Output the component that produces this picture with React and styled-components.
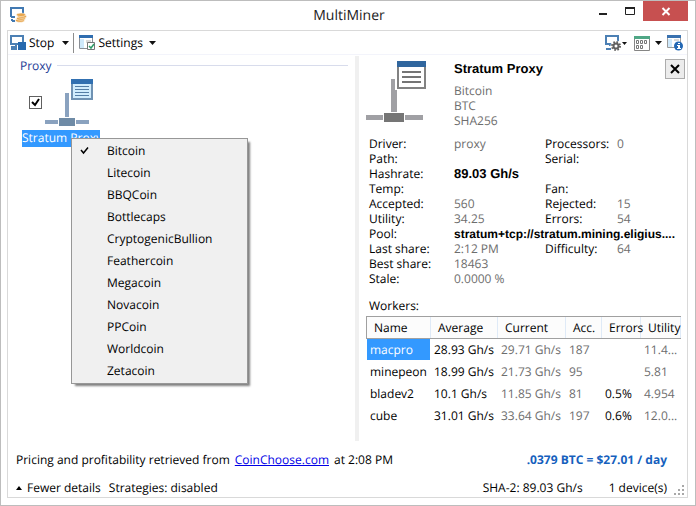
import React from "react";
import styled, { createGlobalStyle } from "styled-components";

const GlobalStyle = createGlobalStyle`
  * { box-sizing: border-box; }
  body { margin: 0; background: #fff; text-rendering: geometricPrecision; }
  body, button, input, table {
    font-family: "Open Sans", "Noto Sans", sans-serif;
    font-size: 12px;
    line-height: 15px;
    color: #000;
  }
  button { padding: 0; border: 0; background: none; text-rendering: inherit; }
`;

const Window = styled.div`
  display: flex;
  flex-direction: column;
  min-height: 100vh;
  padding: 0 7px 7px 6px;
  border: 1px solid #bdbdbd;
`;

const TitleBar = styled.header`
  display: grid;
  grid-template-columns: 1fr auto 1fr;
  height: 29px;
  padding-left: 3px;
`;

const AppIcon = styled.div`
  padding-top: 5px;
`;

const Title = styled.h1`
  margin: 0;
  padding-top: 5px;
  font-size: 14px;
  font-weight: 400;
  line-height: 20px;
  color: #222;
`;

const WindowButtons = styled.div`
  display: flex;
  justify-content: flex-end;
  height: 20px;
`;

const WindowButton = styled.button`
  width: ${(p) => (p.$close ? 45 : 27)}px;
  height: 20px;
  background: ${(p) => (p.$close ? "#c75050" : "transparent")};
  svg { display: block; margin: 0 auto; }
`;

const Client = styled.div`
  display: flex;
  flex: 1;
  flex-direction: column;
  border: 1px solid #d9d9d9;
`;

const Toolbar = styled.div`
  display: flex;
  align-items: center;
  height: 24px;
  padding: 0 4px 0 2px;
  border-bottom: 1px solid #f3f4fb;
`;

const ToolButton = styled.button`
  display: flex;
  align-items: center;
  gap: 3px;
  height: 22px;
`;

const ToolArrow = styled.button`
  width: 9px;
  height: 22px;
  margin: 0 ${(p) => p.$after || 0}px 0 ${(p) => p.$before || 0}px;
  svg { display: block; }
`;

const Divider = styled.span`
  width: 1px;
  height: 20px;
  margin-right: 5px;
  background: #8d8d8d;
`;

const Spacer = styled.span`
  flex: 1;
`;

const Panes = styled.div`
  display: flex;
  flex: 1;
  min-height: 386px;
  padding-top: 1px;
`;

const DeviceList = styled.main`
  flex: 1;
  padding: 2px 7px 0 12px;
`;

const GroupTitle = styled.h2`
  display: flex;
  align-items: center;
  gap: 5px;
  margin: 0;
  color: #1e3d96;
  font-size: 12px;
  font-weight: 400;
  &::after { content: ""; flex: 1; height: 1px; background: #d8dcec; }
`;

const Device = styled.div`
  position: relative;
  width: 78px;
  margin: 5px 0 0 2px;
`;

const DeviceTop = styled.div`
  display: flex;
  gap: 3px;
  padding-left: 7px;
`;

const Check = styled.input`
  appearance: none;
  width: 13px;
  height: 13px;
  margin: 18px 0 0;
  border: 1px solid #606060;
  background: #fff;
  &:checked {
    background: #fff url("data:image/svg+xml,%3Csvg xmlns='http://www.w3.org/2000/svg' viewBox='0 0 11 11'%3E%3Cpath d='M2 5l3 3 4-6' fill='none' stroke='%23000' stroke-width='2'/%3E%3C/svg%3E");
  }
`;

const DeviceName = styled.label`
  display: block;
  height: 17px;
  margin-top: 4px;
  background: #3399ff;
  color: #fff;
  text-align: center;
  white-space: nowrap;
`;

const Menu = styled.div`
  position: absolute;
  top: 60px;
  left: 49px;
  z-index: 1;
  width: 177px;
  padding: 1px 0;
  border: 1px solid #979797;
  background: #f0f0f0;
  box-shadow: 3px 3px 2px -1px rgba(0, 0, 0, 0.5);
`;

const MenuItem = styled.button`
  display: grid;
  grid-template-columns: 35px 1fr;
  align-items: center;
  width: 100%;
  height: 22px;
  padding-bottom: 1px;
  text-align: left;
  svg { margin-left: 8px; }
`;

const Splitter = styled.div`
  width: 4px;
  background: #f0f0f0;
`;

const Details = styled.aside`
  width: 328px;
  padding: 2px 2px 0 7px;
`;

const DetailsHead = styled.div`
  display: grid;
  grid-template-columns: 88px 1fr 20px;
  align-items: start;
  height: 78px;
`;

const Summary = styled.div`
  padding-top: 3px;
  color: #6d6d6d;
`;

const Strong = styled.strong`
  font-family: "Liberation Sans", Arial, sans-serif;
  font-size: ${(p) => (p.$large ? 13 : 12)}px;
  color: #000;
  white-space: nowrap;
`;

const SummaryName = styled.div`
  height: 22px;
`;

const CloseButton = styled.button`
  width: 20px;
  height: 20px;
  margin-top: 1px;
  border: 1px solid #acacac;
  background: #ececec;
  svg { display: block; margin: 0 auto; }
`;

const Facts = styled.dl`
  display: grid;
  grid-template-columns: 85px 91px 72px 1fr;
  grid-auto-rows: 15px;
  margin: 0 0 12px;
  padding-left: 3px;
  dt, dd { margin: 0; white-space: nowrap; }
  dd { color: #6d6d6d; }
`;

const WideValue = styled.dd`
  grid-column: 2 / -1;
`;

const Workers = styled.table`
  width: 315px;
  table-layout: fixed;
  border-collapse: separate;
  border-spacing: 0;
  border-left: 1px solid transparent;
  caption { padding: 0 0 3px 3px; text-align: left; }
`;

const HeadCell = styled.th`
  height: 23px;
  width: ${(p) => p.$width}px;
  padding: 0 0 0 7px;
  border: solid #a0a0a0;
  border-width: 1px 0;
  background: #fcfcfc;
  box-shadow: inset -1px 0 #dfeaf7, -1px 0 ${(p) => (p.$first ? "#a0a0a0" : "transparent")};
  font-weight: 400;
  text-align: left;
`;

const Cell = styled.td`
  height: 22px;
  padding: 0 0 1px 3px;
  color: ${(p) => (p.$selected ? "#fff" : p.$muted ? "#6d6d6d" : "#000")};
  background: ${(p) => (p.$selected ? "#3399ff" : "transparent")};
  box-shadow: inset -1px -1px #fff;
  white-space: nowrap;
`;

const StatusBar = styled.footer`
  display: flex;
  align-items: center;
  height: ${(p) => (p.$bottom ? 20 : 36)}px;
  padding: 0 20px 0 8px;
  a { margin: 0 5px; color: #0000e6; }
`;

const Earnings = styled.strong`
  color: #1560bd;
`;

const DetailsToggle = styled.button`
  display: flex;
  align-items: center;
  gap: 5px;
  margin-right: 8px;
`;

const StatusItem = styled.span`
  margin-right: ${(p) => p.$gap || 0}px;
`;

const Grip = styled.svg`
  margin: 6px -18px 0 7px;
`;

const Arrow = () => (
  <svg width="9" height="22" aria-hidden="true">
    <path d="M1 9h7L4.500 13z" fill="#111" />
  </svg>
);

const SmallArrow = () => (
  <svg width="9" height="22" aria-hidden="true">
    <path d="M1 10h5L3.500 13z" fill="#111" />
  </svg>
);

const CoinsIcon = () => (
  <svg width="17" height="17" viewBox="0 0 17 17" aria-hidden="true">
    <path d="M1 11V2h12v6M1 11h4M2 15h3M2 13v2" fill="none" stroke="#4279b2" strokeWidth="2" />
    <g fill="#e8a64c" stroke="#fff" strokeWidth="0.500">
      <ellipse cx="10" cy="14.500" rx="4.500" ry="1.800" />
      <ellipse cx="11" cy="12.500" rx="4.500" ry="1.800" />
      <ellipse cx="12" cy="10.500" rx="4.500" ry="1.800" />
      <ellipse cx="11" cy="8.800" rx="4.500" ry="1.800" />
    </g>
  </svg>
);

const StopIcon = () => (
  <svg width="16" height="17" viewBox="0 0 16 17" aria-hidden="true">
    <path d="M1 10V2h12v6M0 10h8M6 10v3M2 15v-2h4v2z" fill="none" stroke="#4c80b4" strokeWidth="2" />
    <path d="M8 8h8v8H8z" fill="#2769ae" />
  </svg>
);

const SettingsIcon = () => (
  <svg width="16" height="17" viewBox="0 0 16 17" aria-hidden="true">
    <path d="M.5 3.500h13v11H.5z" fill="#fff" stroke="#8a8f96" />
    <path d="M0 1h14v3H0z" fill="#2f6db0" />
    <path d="M1 5h4v9H1z" fill="#cfe9fb" />
    <path d="M7 6h5v3H7z" fill="#d9d9d9" />
    <path d="M8.500 8.500h7v7h-7z" fill="#fff" stroke="#777" />
    <path d="M10 12l2 2 3-4" fill="none" stroke="#2f9d68" strokeWidth="1.500" />
  </svg>
);

const GearMonitorIcon = () => (
  <svg width="16" height="17" viewBox="0 0 16 17" aria-hidden="true">
    <path d="M1 10V2h12v5M0 10h7M5 10v2M1 15h5" fill="none" stroke="#4c80b4" strokeWidth="2" />
    <circle cx="11" cy="12" r="5.500" fill="#fff" />
    <circle cx="11" cy="12" r="4" fill="none" stroke="#606060" strokeWidth="2" strokeDasharray="1.600 1.540" />
    <circle cx="11" cy="12" r="2.500" fill="none" stroke="#606060" strokeWidth="2" />
  </svg>
);

const CalendarIcon = () => (
  <svg width="16" height="16" viewBox="0 0 16 16" aria-hidden="true">
    <path d="M.5 2.500h15v13H.5z" fill="#fff" stroke="#858585" />
    <path d="M0 1h16v3H0z" fill="#4fa786" />
    <path d="M2.500 5.500h2v3h-2zM6.500 5.500h2v3h-2zM10.500 5.500h2v3h-2zM2.500 10.500h2v3h-2zM6.500 10.500h2v3h-2z" fill="#fff" stroke="#777" />
  </svg>
);

const InfoIcon = () => (
  <svg width="16" height="17" viewBox="0 0 16 17" aria-hidden="true">
    <path d="M.5 3.500h13v10H.5z" fill="#fff" stroke="#9b9b9b" />
    <path d="M0 1h14v3H0z" fill="#3a72b0" />
    <path d="M1 5h4v8H1z" fill="#cfe9fb" />
    <path d="M7 5h5v2H7z" fill="#d9d9d9" />
    <circle cx="11.500" cy="12" r="4.500" fill="#2468b4" />
    <path d="M11 9h2v1h-2zM10 11h3v3h1v1h-4v-1h1v-2h-1z" fill="#fff" />
  </svg>
);

const ProxyIcon = () => (
  <svg width="48" height="48" viewBox="0 0 48 48" shapeRendering="crispEdges" aria-hidden="true">
    <path d="M20 15h4v24h-4zM0 42h13v4H0zM31 42h13v4H31z" fill="#8aa2bf" />
    <path d="M14 40h16v8H14z" fill="#6f8ba6" />
    <path d="M26 1h22v21H26z" fill="#6f92b3" />
    <path d="M28 6h18v14H28z" fill="#d0ecfd" />
    <path d="M26 1h22v5H26z" fill="#3170b1" />
    <path d="M30 8h14v1H30zM30 11h14v1H30zM30 14h14v1H30zM30 17h14v1H30z" fill="#537da5" />
  </svg>
);

const LargeProxyIcon = () => (
  <svg width="62" height="66" viewBox="0 0 62 66" shapeRendering="crispEdges" aria-hidden="true">
    <path d="M25 21h4v11h2v22h-6zM-1 57h18v5H-1zM39 57h18v5H39z" fill="#a0a0a4" />
    <path d="M18 55h20v9H18z" fill="#757575" />
    <path d="M31 3h29v28H31z" fill="#828282" />
    <path d="M33 9h25v20H33z" fill="#fff" />
    <path d="M31 3h29v6H31z" fill="#30669e" />
    <path d="M36 13h19v2H36zM36 18h19v2H36zM36 23h19v2H36z" fill="#757575" />
  </svg>
);

const coins = [
  "Bitcoin", "Litecoin", "BBQCoin", "Bottlecaps", "CryptogenicBullion", "Feathercoin",
  "Megacoin", "Novacoin", "PPCoin", "Worldcoin", "Zetacoin",
];

const facts = [
  ["Driver:", "proxy", "Processors:", "0"],
  ["Path:", "", "Serial:", ""],
  ["Hashrate:", <Strong $large>89.03 Gh/s</Strong>, "", ""],
  ["Temp:", "", "Fan:", ""],
  ["Accepted:", "560", "Rejected:", "15"],
  ["Utility:", "34.25", "Errors:", "54"],
  ["Pool:", <Strong>stratum+tcp://stratum.mining.eligius....</Strong>],
  ["Last share:", "2:12 PM", "Difficulty:", "64"],
  ["Best share:", "18463", "", ""],
  ["Stale:", "0.0000 %", "", ""],
];

const columns = [
  ["Name", 64], ["Average", 67], ["Current", 68], ["Acc.", 36], ["Errors", 39], ["Utility", 40],
];

const workers = [
  ["macpro", "28.93 Gh/s", "29.71 Gh/s", "187", "", "11.4..."],
  ["minepeon", "18.99 Gh/s", "21.73 Gh/s", "95", "", "5.81"],
  ["bladev2", "10.1 Gh/s", "11.85 Gh/s", "81", "0.5%", "4.954"],
  ["cube", "31.01 Gh/s", "33.64 Gh/s", "197", "0.6%", "12.0..."],
];

const mutedColumns = [2, 3, 5];

export default function App() {
  return (
    <>
      <GlobalStyle />
      <Window>
        <TitleBar>
          <AppIcon><CoinsIcon /></AppIcon>
          <Title>MultiMiner</Title>
          <WindowButtons>
            <WindowButton aria-label="Minimize">
              <svg width="27" height="20"><path d="M10 12h8v2h-8z" fill="#222" /></svg>
            </WindowButton>
            <WindowButton aria-label="Maximize">
              <svg width="27" height="20"><path d="M9.500 7h9v6.500h-9z" fill="none" stroke="#222" /><path d="M9 6h10v2H9z" fill="#222" /></svg>
            </WindowButton>
            <WindowButton $close aria-label="Close">
              <svg width="45" height="20"><path d="M19.500 7l7 7M26.500 7l-7 7" stroke="#fff" strokeWidth="2" /></svg>
            </WindowButton>
          </WindowButtons>
        </TitleBar>

        <Client>
          <Toolbar>
            <ToolButton><StopIcon />Stop</ToolButton>
            <ToolArrow $before={7} $after={3} aria-label="Stop options"><Arrow /></ToolArrow>
            <Divider />
            <ToolButton><SettingsIcon />Settings</ToolButton>
            <ToolArrow $before={5} aria-label="Settings options"><Arrow /></ToolArrow>
            <Spacer />
            <ToolButton aria-label="Strategies"><GearMonitorIcon /></ToolButton>
            <ToolArrow $after={4} aria-label="Strategies options"><SmallArrow /></ToolArrow>
            <ToolButton aria-label="History"><CalendarIcon /></ToolButton>
            <ToolArrow $before={4} $after={4} aria-label="History options"><Arrow /></ToolArrow>
            <ToolButton aria-label="Details"><InfoIcon /></ToolButton>
          </Toolbar>

          <Panes>
            <DeviceList>
              <GroupTitle>Proxy</GroupTitle>
              <Device>
                <DeviceTop>
                  <Check type="checkbox" id="stratum" defaultChecked />
                  <ProxyIcon />
                </DeviceTop>
                <DeviceName htmlFor="stratum">Stratum Proxy</DeviceName>
                <Menu role="menu">
                  {coins.map((coin, i) => (
                    <MenuItem key={coin} role="menuitemradio" aria-checked={i === 0}>
                      <span>
                        {i === 0 && (
                          <svg width="9" height="9"><path d="M1 4l2.500 3L8 1.500" fill="none" stroke="#000" strokeWidth="1.500" /></svg>
                        )}
                      </span>
                      {coin}
                    </MenuItem>
                  ))}
                </Menu>
              </Device>
            </DeviceList>
            <Splitter />
            <Details>
              <DetailsHead>
                <LargeProxyIcon />
                <Summary>
                  <SummaryName><Strong $large>Stratum Proxy</Strong></SummaryName>
                  <div>Bitcoin</div>
                  <div>BTC</div>
                  <div>SHA256</div>
                </Summary>
                <CloseButton aria-label="Close details">
                  <svg width="18" height="18"><path d="M5 5l8 8M13 5l-8 8" stroke="#000" strokeWidth="2" /></svg>
                </CloseButton>
              </DetailsHead>
              <Facts>
                {facts.map(([label, value, label2, value2]) => (
                  <React.Fragment key={label}>
                    <dt>{label}</dt>
                    {label2 === undefined ? (
                      <WideValue>{value}</WideValue>
                    ) : (
                      <>
                        <dd>{value}</dd>
                        <dt>{label2}</dt>
                        <dd>{value2}</dd>
                      </>
                    )}
                  </React.Fragment>
                ))}
              </Facts>
              <Workers>
                <caption>Workers:</caption>
                <thead>
                  <tr>
                    {columns.map(([name, width], i) => (
                      <HeadCell key={name} scope="col" $width={width} $first={i === 0}>{name}</HeadCell>
                    ))}
                  </tr>
                </thead>
                <tbody>
                  {workers.map((row, r) => (
                    <tr key={row[0]}>
                      {row.map((value, c) => (
                        <Cell key={c} $selected={r === 0 && c === 0} $muted={mutedColumns.includes(c)}>{value}</Cell>
                      ))}
                    </tr>
                  ))}
                </tbody>
              </Workers>
            </Details>
          </Panes>

          <StatusBar>
            <StatusItem>Pricing and profitability retrieved from</StatusItem>
            <a href="#coinchoose">CoinChoose.com</a>
            <StatusItem>at 2:08 PM</StatusItem>
            <Spacer />
            <Earnings>.0379 BTC = $27.01 / day</Earnings>
          </StatusBar>
          <StatusBar $bottom>
            <DetailsToggle>
              <svg width="6" height="5" aria-hidden="true"><path d="M0 5h6L3 1z" fill="#000" /></svg>
              Fewer details
            </DetailsToggle>
            <StatusItem>Strategies: disabled</StatusItem>
            <Spacer />
            <StatusItem $gap={26}>SHA-2: 89.03 Gh/s</StatusItem>
            <StatusItem>1 device(s)</StatusItem>
            <Grip width="11" height="11" aria-hidden="true">
              <path d="M8 0h2v2H8zM4 4h2v2H4zM8 4h2v2H8zM0 8h2v2H0zM4 8h2v2H4zM8 8h2v2H8z" fill="#a8a8a8" />
            </Grip>
          </StatusBar>
        </Client>
      </Window>
    </>
  );
}
